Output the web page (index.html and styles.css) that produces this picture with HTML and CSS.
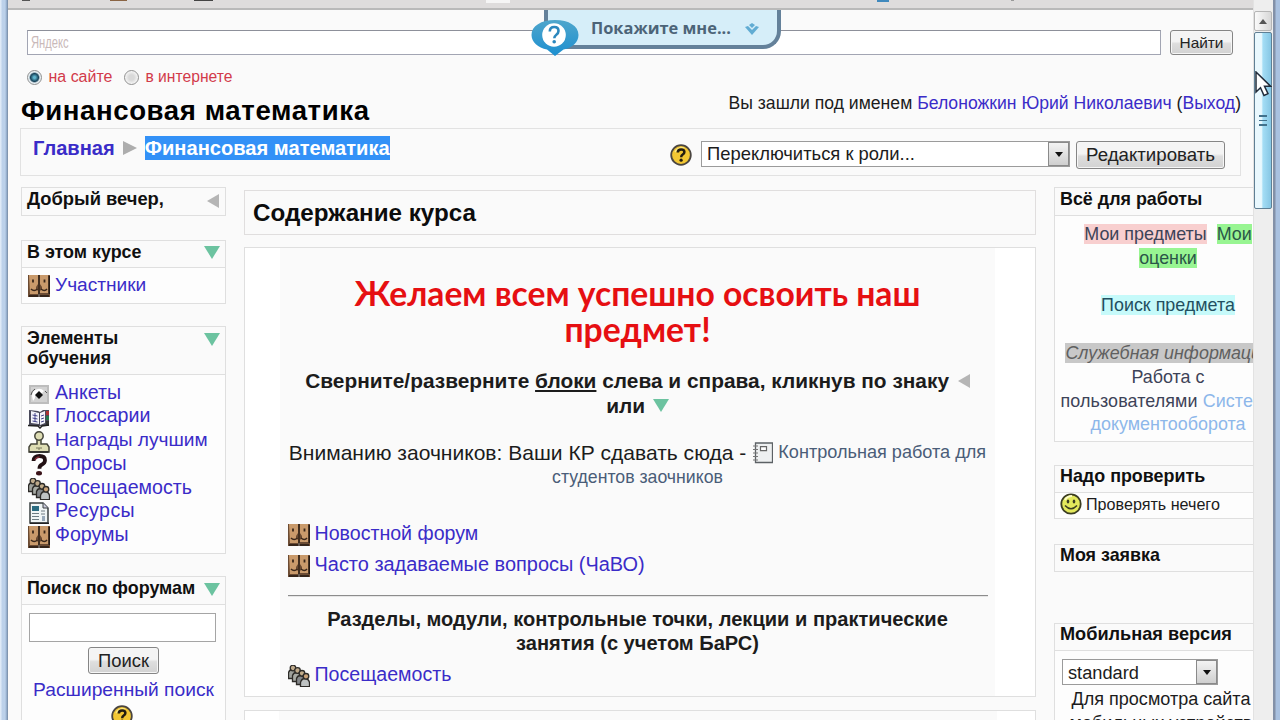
FILE: index.html
```html
<!DOCTYPE html>
<html lang="ru">
<head>
<meta charset="utf-8">
<title>Финансовая математика</title>
<link rel="stylesheet" href="styles.css">
</head>
<body>
<svg class="defs" aria-hidden="true">
  <symbol id="faces" viewBox="0 0 22 22">
    <path d="M0 0h22v22H12v-3h-2v3H0z" fill="#6b4b33"/>
    <path d="M1 0h9v9l-2 3v2l2 2v3H2zM12 0h8v18h-8v-2l2-2v-2l-2-3z" fill="#c99a6b"/>
    <path d="M5 4.500v3M16.500 4.500v3" stroke="#38261a" stroke-width="1.8"/>
    <path d="M3 14q3 3 6.500 0M13 14q3.500 3 6 0" fill="none" stroke="#38261a" stroke-width="1.6"/>
    <path d="M21.300 1v18M1 21h9M12 21h9" stroke="#241a14" stroke-width="1.600"/>
    <path d="M11 0v22" stroke="#33251a" stroke-width="1.500"/>
  </symbol>
  <symbol id="survey" viewBox="0 0 22 22">
    <path d="M1 2h20v19H1z" fill="#bdbdbd"/><path d="M3 4h16v15H3z" fill="#d2d2d2"/>
    <path d="M4 13a7 7 0 0 1 12-5l-2 2a5 5 0 0 0-7 5l-2 3z" fill="#fff"/>
    <path d="M3 12a8 8 0 0 1 4-6M17 8l2 2" stroke="#555" fill="none"/>
    <path d="M11 8l4 4-4 4-4-4z" fill="#111"/>
  </symbol>
  <symbol id="book" viewBox="0 0 22 22">
    <path d="M1 3l9 1 2 1 3-2h6v16H1z" fill="#4a4a5a"/>
    <path d="M3 4l8 2v11l-8-1zM12 6l5-2v12l-5 2z" fill="#f4f4fa"/>
    <path d="M4.500 8l5 1M4.500 11l5 1M4.500 14l5 1M13 9l3-1M13 12l3-1M13 15l3-1M7 6v9" stroke="#45458a"/>
    <path d="M18 4h3v4h-3z" fill="#a33"/><path d="M18 9h3v4h-3z" fill="#237a4c"/><path d="M18 14h3v4h-3z" fill="#333"/>
    <path d="M0 18.500l10 .5 2 2 2-2 7-1" stroke="#222" stroke-width="1.5" fill="none"/>
  </symbol>
  <symbol id="award" viewBox="0 0 22 22">
    <path d="M9 8h4v5h6l2 3v5H1v-5l2-3h6z" fill="#deddb4" stroke="#45453a" stroke-width="1.500"/>
    <circle cx="11" cy="5" r="4.200" fill="#deddb4" stroke="#45453a" stroke-width="1.500"/>
    <path d="M8 17h6M10 18h2" stroke="#77775c"/><path d="M1.500 21h19" stroke="#222" stroke-width="1.500"/>
  </symbol>
  <symbol id="choice" viewBox="0 0 22 22">
    <path d="M5.500 7q0-5 6-5 5.500 0 5.500 4.200 0 2.800-3 4.300-2.600 1.200-2.600 4.200" fill="none" stroke="#221013" stroke-width="3.800"/>
    <path d="M7 6q1-3 4.500-3" fill="none" stroke="#7c2934" stroke-width="1.500"/>
    <ellipse cx="11" cy="19.300" rx="3" ry="2.200" fill="#3a1319"/>
  </symbol>
  <symbol id="crowd" viewBox="0.500 0.500 22 22">
    <g stroke="#2d2b28" stroke-width="1.300">
      <path d="M1 14V8q1-3 4-3t4 3v6z" fill="#9da09b"/><circle cx="5.500" cy="3.500" r="2.800" fill="#bda98a"/>
      <path d="M5 17v-6q1-3 4-3t4 3v6z" fill="#a7aaa4"/><circle cx="10" cy="6" r="2.800" fill="#bda98a"/>
      <path d="M9 20v-6q1-3 4-3t4 3v6z" fill="#85888a"/><circle cx="14.500" cy="8.800" r="2.800" fill="#c2ad8b"/>
      <path d="M13 22.200V18q1-4 4.500-4t4.500 4v4.200z" fill="#bfc3c3"/><circle cx="18.500" cy="11.800" r="2.800" fill="#caa379"/>
    </g>
  </symbol>
  <symbol id="resource" viewBox="0 0 22 22">
    <path d="M2 1h13l5 5v15H2z" fill="#f0f5f5" stroke="#3a4042" stroke-width="1.500"/>
    <path d="M15 1v5h5" fill="#ccd" stroke="#3a4042"/>
    <path d="M4 4h7v5H4z" fill="#2a6b80"/>
    <path d="M4 11.500h7M4 14.500h7M4 17.500h7M13 9h4M13 12h4" stroke="#6e7c83" stroke-width="1.200"/>
    <path d="M14 14h3v5h-3z" fill="#9ab"/><path d="M2 21.300h19" stroke="#222" stroke-width="1.400"/>
  </symbol>
  <symbol id="help" viewBox="0 0 22 22">
    <circle cx="11" cy="11" r="9.800" fill="#f3c733" stroke="#4a4540" stroke-width="1.800"/>
    <path d="M5 8q3-5 9-4" fill="none" stroke="#fbe88a" stroke-width="1.500"/>
    <path d="M7.800 8.600q0-3.200 3.300-3.200t3.300 2.700q0 1.700-1.800 2.600-1.400.7-1.400 2.500" fill="none" stroke="#221c10" stroke-width="2.500"/>
    <circle cx="11.100" cy="16.200" r="1.600" fill="#221c10"/>
  </symbol>
  <symbol id="smile" viewBox="0 0 22 22">
    <circle cx="11" cy="11" r="9.700" fill="#e3e85c" stroke="#3b3d22" stroke-width="1.800"/>
    <path d="M5 7q2-4 7-4" stroke="#fafbc4" stroke-width="2" fill="none"/>
    <ellipse cx="8" cy="8.500" rx="1.300" ry="2" fill="#3b3d22"/><ellipse cx="14" cy="8.500" rx="1.300" ry="2" fill="#3b3d22"/>
    <path d="M5 12.500q6 6.500 12 0" fill="none" stroke="#3b3d22" stroke-width="1.600"/>
  </symbol>
  <symbol id="notebook" viewBox="0 0 20 22">
    <path d="M2.500 1h17v19.500h-17z" fill="#eef0f1" stroke="#5c6165" stroke-width="1.300"/>
    <path d="M7.500 4.700h6v4h-6z" fill="#fff" stroke="#666" stroke-width="1.200"/>
    <path d="M0 4h5M0 7.500h5M0 11h5M0 14.500h5M0 18h5" stroke="#777" stroke-width="1.200"/>
  </symbol>
  <symbol id="down" viewBox="0 0 16 13"><path d="M0 0h16L8 13z" fill="#6cc3a0"/></symbol>
  <symbol id="left" viewBox="0 0 12 14"><path d="M12 0v14L0 7z" fill="#b5b5b5"/></symbol>
</svg>

<div class="window">
  <div class="edge-left"></div>
  <div class="view">
    <div class="toolbar"><i class="tab t1"></i><i class="tab t2"></i><i class="tab t3"></i><i class="tab t4"></i><i class="tab t5"></i><i class="tab t6"></i></div>
    <div class="page">
      <div class="search">
        <div class="yandex"><span>Яндекс</span></div>
        <div class="btn find">Найти</div>
      </div>
      <div class="scope">
        <i class="radio on"></i><span class="site">на сайте</span><i class="radio"></i><span class="net">в интернете</span>
      </div>
      <div class="header">
        <h1>Финансовая математика</h1>
        <div class="login">Вы зашли под именем <a>Белоножкин Юрий Николаевич</a> (<a>Выход</a>)</div>
      </div>
      <div class="navbar">
        <div class="crumbs"><a>Главная</a><i class="arrow"></i><span class="sel">Финансовая математика</span></div>
        <div class="tools">
          <svg class="ic"><use href="#help"/></svg>
          <div class="select role"><span>Переключиться к роли...</span><i></i></div>
          <div class="btn edit">Редактировать</div>
        </div>
      </div>
      <div class="columns">
        <div class="col left">
          <div class="block hello"><h2>Добрый вечер,<svg class="tl"><use href="#left"/></svg></h2></div>
          <div class="block course"><h2>В этом курсе<svg class="td"><use href="#down"/></svg></h2>
            <div class="body"><div class="item"><svg class="ic"><use href="#faces"/></svg><a class="s1">Участники</a></div></div>
          </div>
          <div class="block activities"><h2><span>Элементы<br>обучения</span><svg class="td"><use href="#down"/></svg></h2>
            <div class="body">
              <div class="item"><svg class="ic"><use href="#survey"/></svg><a>Анкеты</a></div>
              <div class="item"><svg class="ic"><use href="#book"/></svg><a>Глоссарии</a></div>
              <div class="item"><svg class="ic"><use href="#award"/></svg><a class="s1">Награды лучшим</a></div>
              <div class="item"><svg class="ic"><use href="#choice"/></svg><a>Опросы</a></div>
              <div class="item"><svg class="ic"><use href="#crowd"/></svg><a>Посещаемость</a></div>
              <div class="item"><svg class="ic"><use href="#resource"/></svg><a class="wide">Ресурсы</a></div>
              <div class="item"><svg class="ic"><use href="#faces"/></svg><a>Форумы</a></div>
            </div>
          </div>
          <div class="block forums"><h2>Поиск по форумам<svg class="td"><use href="#down"/></svg></h2>
            <div class="body">
              <div class="field"></div>
              <div class="btn go">Поиск</div>
              <a>Расширенный поиск</a>
              <svg class="ic"><use href="#help"/></svg>
            </div>
          </div>
        </div>
        <div class="col center">
          <div class="title">Содержание курса</div>
          <div class="course-box">
            <div class="inner">
              <div class="wish">Желаем всем успешно освоить наш<br>предмет!</div>
              <div class="fold">Сверните/разверните <u>блоки</u> слева и справа, кликнув по знаку <svg class="tl"><use href="#left"/></svg><br>или <svg class="td"><use href="#down"/></svg></div>
              <div class="note">
                <div class="row"><span>Вниманию заочников: Ваши КР сдавать сюда -</span><svg class="nb"><use href="#notebook"/></svg><a>Контрольная работа для</a></div>
                <a class="second">студентов заочников</a>
              </div>
              <div class="mod"><svg class="ic"><use href="#faces"/></svg><a>Новостной форум</a></div>
              <div class="mod"><svg class="ic"><use href="#faces"/></svg><a class="s2">Часто задаваемые вопросы (ЧаВО)</a></div>
              <hr>
              <div class="sections">Разделы, модули, контрольные точки, лекции и практические<br>занятия (с учетом БаРС)</div>
              <div class="mod"><svg class="ic"><use href="#crowd"/></svg><a>Посещаемость</a></div>
            </div>
          </div>
          <div class="next-box"><div></div></div>
        </div>
        <div class="col right">
          <div class="block work"><h2>Всё для работы</h2>
            <div class="body">
              <span class="pink">Мои предметы</span>&nbsp; <span class="green">Мои</span><br>
              <span class="green">оценки</span><br><br>
              <span class="cyan">Поиск предмета</span><br><br>
              <span class="grey">Служебная информация</span><br>
              <span>Работа с</span><br>
              <span class="users">пользователями <a>Система</a></span><br>
              <a>документооборота</a>
            </div>
          </div>
          <div class="block check"><h2>Надо проверить</h2>
            <div class="body"><svg class="ic"><use href="#smile"/></svg>Проверять нечего</div>
          </div>
          <div class="block request"><h2>Моя заявка</h2></div>
          <div class="block mobile"><h2>Мобильная версия</h2>
            <div class="body">
              <div class="select theme"><span>standard</span><i></i></div>
              <p>Для просмотра сайта<br>мобильных устройств</p>
            </div>
          </div>
        </div>
      </div>
    </div>
  </div>
  <div class="scroll">
    <div class="up"><svg viewBox="0 0 10 6"><path d="M0 6L5 0l5 6z" fill="#555"/></svg></div>
    <div class="thumb"><i></i><i></i><i></i></div>
  </div>
  <div class="edge-right"></div>
</div>

<div class="show-me"><span>Покажите мне...</span>
  <svg viewBox="0 0 14 12"><path d="M0 4l3-1 4 4 4-4 3 1-7 8z" fill="#61acd3"/><path d="M4 2l3-2 3 2-3 3z" fill="#61acd3"/></svg>
</div>
<svg class="bubble" viewBox="0 0 48 38">
  <defs><linearGradient id="bg" x1="0" y1="0" x2="0" y2="1"><stop offset="0" stop-color="#4fa6cc"/><stop offset="1" stop-color="#1c8fd0"/></linearGradient></defs>
  <path d="M24 1C38 1 47.500 7 47.500 16c0 7-6 13-15 14.500L24 37l-8-6.500C7 29 .5 23 .5 16 .5 7 10 1 24 1z" fill="url(#bg)"/>
  <circle cx="23" cy="16" r="11.800" fill="#fff"/>
  <path d="M18.800 12.500q0-4.500 4.500-4.500 4.200 0 4.200 4 0 2.400-2.400 4-1.800 1.200-1.800 3.300" fill="none" stroke="#2b87bd" stroke-width="2.600"/>
  <circle cx="23.200" cy="22.800" r="1.800" fill="#2b87bd"/>
</svg>
<svg class="cursor" viewBox="0 0 17 26"><path d="M1 1v20l4.500-4.300L9 24.500l4-1.800-3.500-7.500H15.500z" fill="#fff" stroke="#222c3a" stroke-width="1.500"/></svg>
</body>
</html>
```
FILE: styles.css
```css
* { box-sizing: border-box; }
body { margin: 0; width: 1280px; height: 720px; overflow: hidden; background: #fafafa; font-family: "Liberation Sans", sans-serif; color: #1c1c1c; }
h1, h2, p { margin: 0; }
a { color: #3a2cc8; }
svg { flex: none; }
.defs { position: absolute; width: 0; height: 0; }
.ic { width: 22px; height: 22px; }
.td { width: 16px; height: 13px; }
.tl { width: 12px; height: 14px; }

.window { display: flex; width: 1280px; height: 720px; overflow: hidden; }
.edge-left { width: 8px; background: linear-gradient(90deg, #dfeaf7 0 1px, #bcd1ea 2px 5px, #8aa4c4 7px, #76879b 8px); }
.view { width: 1245px; overflow: hidden; }
.toolbar { height: 10px; background: #dedcdc; border-bottom: 2px solid #b9b9b9; display: flex; }
.tab { flex: none; height: 1px; width: 12px; background: #555; }
.t1 { margin-left: 14px; width: 8px; }
.t2 { margin-left: 80px; width: 17px; background: #8a6444; }
.t3 { margin-left: 67px; width: 19px; background: #444; }
.t4 { margin-left: 273px; width: 24px; height: 3px; background: #f5f5f5; }
.t5 { margin-left: 367px; width: 12px; height: 2px; background: #4089bd; }
.t6 { margin-left: 122px; width: 3px; background: #999; }

.page { padding: 20px 0 0 13px; }
.search { display: flex; gap: 9px; padding-left: 6px; }
.yandex { width: 1134px; height: 25px; border: 1px solid #a2a5b3; border-top-color: #8d909a; background: #fff; color: #c9b9b9; font-size: 16px; line-height: 24px; padding-left: 3px; }
.yandex span { display: inline-block; transform: scaleX(.7); transform-origin: left; }
.btn { border: 1px solid #858585; border-radius: 3px; background: linear-gradient(#f4f4f4 0 45%, #dedede 55%, #d2d2d2); box-shadow: inset 0 0 0 1px #f6f6f6; text-align: center; white-space: nowrap; color: #222; }
.find { width: 63px; height: 25px; font-size: 15.420px; line-height: 24px; }
.scope { display: flex; align-items: center; height: 22px; margin-top: 11px; padding-left: 6px; color: #d23a4a; }
.radio { width: 15px; height: 15px; border: 1px solid #8f8f8f; border-radius: 50%; background: radial-gradient(#d9d9d9 30%, #f5f5f5 70%); }
.radio.on { background: radial-gradient(#5fb4cc 0 1px, #17435a 4px, #e8f0f4 5.500px); }
.site { font-size: 15.980px; margin: 0 12px 0 6.500px; }
.net { font-size: 15.660px; margin-left: 6px; }
.header { display: flex; justify-content: space-between; width: 1220px; height: 40px; }
h1 { font-size: 27.600px; letter-spacing: .6px; line-height: 32px; padding-top: 7px; color: #000; white-space: nowrap; }
.login { font-size: 17.630px; line-height: 20px; padding-top: 5px; white-space: nowrap; }
.navbar { display: flex; justify-content: space-between; width: 1221px; height: 48px; margin-left: -1px; border: 1px solid #e2e2e2; padding: 7px 15px 0 12px; }
.crumbs { display: flex; font-weight: bold; font-size: 20.120px; line-height: 24px; height: 24px; white-space: nowrap; }
.arrow { border: solid transparent; border-width: 7px 0 7px 14px; border-left-color: #adadad; height: 0; margin: 5px 8px 0 8px; }
.sel { background: #3391f7; color: #fff; }
.tools { display: flex; padding-top: 5px; }
.tools .ic { margin: 3px 9px 0 0; }
.select { display: flex; border: 1px solid #9b9b9b; background: #fff; white-space: nowrap; justify-content: space-between; padding-left: 5px; }
.select i { width: 21px; border: 1px solid #8a8a8a; background: linear-gradient(#f3f3f3, #cfcfcf); display: flex; align-items: center; justify-content: center; }
.select i::after { content: ""; border: solid transparent; border-width: 5px 4.500px 0; border-top-color: #111; }
.role { width: 369px; height: 26px; font-size: 18.400px; line-height: 24px; }
.edit { width: 149px; height: 28px; margin-left: 6px; font-size: 18.670px; line-height: 25px; }

.columns { display: flex; padding-top: 11px; }
.col { flex: none; }
.left { width: 205px; }
.center { width: 792px; margin-left: 18px; padding-top: 3px; }
.right { width: 214px; margin-left: 18px; }
.block { border: 1px solid #dfdfdf; background: #fdfdfd; }
.block h2 { display: flex; justify-content: space-between; height: 27px; background: #fafafa; color: #101010; font-size: 17.900px; line-height: 20px; padding: 1px 5px 0 5px; white-space: nowrap; }
.block h2 .td { margin-top: 4px; }
.block .body { border-top: 1px solid #dfdfdf; }
.hello { height: 29px; }
.hello h2 { font-size: 18.340px; }
.hello h2 .tl { margin: 5px 1px 0 0; }
.course { height: 64px; margin-top: 24px; }
.course h2 { height: 26px; }
.course .body { padding-top: 5px; }
.item { display: flex; align-items: center; height: 23.800px; gap: 5px; padding-left: 6px; font-size: 19.600px; line-height: 23.800px; white-space: nowrap; }
.item .ic { margin-top: 3px; }
.item .s1 { font-size: 19.130px; }
.item .wide { letter-spacing: .4px; }
.activities { height: 228px; margin-top: 22px; }
.activities h2 { height: 47px; padding-top: 1px; }
.activities h2 .td { margin-top: 5px; }
.activities .body { padding-top: 5.500px; }
.forums { height: 170px; margin-top: 22px; }
.forums h2 .td { margin-top: 5px; }
.forums .body { display: flex; flex-direction: column; align-items: center; padding-top: 8px; font-size: 19.220px; line-height: 24px; white-space: nowrap; }
.field { width: 187px; height: 29px; border: 1px solid #a5a5a5; background: #fff; margin-right: 2px; }
.go { width: 71px; height: 27px; margin: 5px 0 4px; font-size: 18.400px; line-height: 26px; }
.forums .body .ic { margin: 3px 4px 0 0; }

.title { height: 45px; border: 1px solid #e0dede; background: #fafafa; padding-left: 8px; font-weight: bold; font-size: 24.190px; line-height: 43px; color: #0c0c0c; }
.course-box { height: 450px; margin-top: 12px; border: 1px solid #dfdfdf; background: #fff; display: flex; justify-content: center; }
.inner { width: 715px; margin-right: 5px; background: #fafafa; padding: 27px 7.500px 0; white-space: nowrap; }
.wish { text-align: center; color: #e60f12; font: 700 33.660px/36px Lato, sans-serif; height: 73px; }
.fold { margin-top: 19.500px; text-align: center; font-weight: bold; font-size: 20.870px; line-height: 25px; height: 50px; }
.fold .tl { margin-left: 3px; }
.fold .td { margin-left: 2px; vertical-align: 1px; }
.note { margin-top: 22px; text-align: center; line-height: 25px; height: 50px; font-size: 18.120px; }
.note .row { display: flex; justify-content: center; height: 25px; }
.note .row span { font-size: 21.040px; }
.note a { color: #4a5d78; }
.note .second { font-size: 17.710px; display: block; }
.nb { width: 20px; height: 22px; margin: 2px 5px 0 7px; }
.inner .note + .mod { margin-top: 28.500px; }
.mod { display: flex; gap: 5px; height: 31px; font-size: 19.600px; line-height: 30px; }
.mod .ic { margin-top: 6px; }
.mod .s2 { font-size: 19.950px; }
hr { height: 2px; margin: 15px 0 10px; border: 0; border-top: 1px solid #8c8c8c; border-bottom: 1px solid #e6e6e6; }
.sections { text-align: center; font-weight: bold; font-size: 20.070px; line-height: 24px; height: 52px; }
.next-box { height: 60px; margin-top: 13px; border: 1px solid #dfdfdf; background: #fff; padding: 0 38px 0 34px; }
.next-box div { height: 58px; background: #fafafa; }

.work { height: 255px; }
.work .body { padding: 7px 0 0; font-size: 17.900px; line-height: 23.800px; text-align: center; width: 226px; color: #3d4358; white-space: nowrap; }
.users { letter-spacing: .1px; }
.work a { color: #8db7ea; }
.pink { background: #f8cfcf; }
.green { background: #98f592; color: #2a5548; }
.cyan { background: #c6fafa; color: #234f60; }
.grey { background: #c8c8c8; color: #606060; font-style: italic; }
.check { height: 54px; margin-top: 23px; }
.check h2, .mobile h2, .request h2 { height: 26px; padding-top: 0; }
.check .body { display: flex; align-items: center; gap: 4px; padding: 0 0 0 5px; font-size: 16.140px; line-height: 22px; white-space: nowrap; }
.request { height: 28px; margin-top: 25px; }
.mobile { height: 120px; margin-top: 51px; }
.mobile h2 { font-size: 18.160px; }
.mobile .body { padding: 8px 0 0 7px; }
.theme { width: 156px; height: 26px; font-size: 18.240px; line-height: 25px; }
.mobile p { width: 198px; text-align: center; margin-top: 2px; font-size: 18.040px; line-height: 24px; white-space: nowrap; }

.scroll { width: 20px; padding: 11px 1px 0 0; background: #eee; border-left: 1px solid #e2e2e2; }
.up { height: 20px; border: 1px solid #b5b5b5; border-radius: 2px; background: linear-gradient(90deg, #fafafa, #d7d7d7); display: flex; align-items: center; justify-content: center; }
.up svg { width: 8px; height: 5px; }
.thumb { height: 177px; margin-top: 1px; border: 1px solid #5f7f94; border-radius: 2px; background: linear-gradient(90deg, #e9f8fe 0 40%, #a4ddf5 50%, #86c6e4); display: flex; flex-direction: column; align-items: center; justify-content: center; gap: 3px; }
.thumb i { width: 8px; height: 1.500px; background: #42718c; }
.edge-right { width: 7px; background: linear-gradient(90deg, #8391a8 0 2px, #a9c1e0 3px); }

.show-me { position: absolute; left: 544px; top: 10px; width: 237px; height: 39px; display: flex; padding: 7px 0 0 43px; background: #d6eef9; border: solid #64819a; border-width: 0 4px 4px; border-radius: 0 0 18px 4px; font: 700 16.400px/22px "Open Sans", sans-serif; color: #4c6478; white-space: nowrap; }
.show-me svg { width: 14px; height: 12px; margin: 6px 0 0 14px; }
.bubble { position: absolute; left: 531px; top: 19px; width: 48px; height: 38px; }
.cursor { position: absolute; left: 1255px; top: 71px; width: 17px; height: 26px; }
```
